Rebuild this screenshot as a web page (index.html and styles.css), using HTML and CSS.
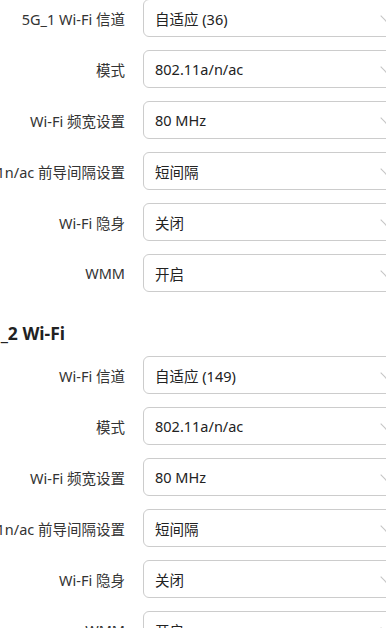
FILE: index.html
```html
<!DOCTYPE html>
<html lang="zh-CN">
<head>
<meta charset="UTF-8">
<meta name="viewport" content="width=device-width, initial-scale=1.0">
<title>Wi-Fi 设置</title>
<link rel="stylesheet" href="styles.css">
</head>
<body>

<div class="page">

    <!-- 5G_1 -->

    <div class="group">

        <div class="row">
            <div class="label"><span>5G_1 Wi-Fi 信道</span></div>
            <div class="select"><span>自适应 (36)</span><i class="arrow"></i></div>
        </div>

        <div class="row">
            <div class="label"><span>模式</span></div>
            <div class="select"><span>802.11a/n/ac</span><i class="arrow"></i></div>
        </div>

        <div class="row">
            <div class="label"><span>Wi-Fi 频宽设置</span></div>
            <div class="select"><span>80 MHz</span><i class="arrow"></i></div>
        </div>

        <div class="row">
            <div class="label"><span>802.11n/ac 前导间隔设置</span></div>
            <div class="select"><span>短间隔</span><i class="arrow"></i></div>
        </div>

        <div class="row">
            <div class="label"><span>Wi-Fi 隐身</span></div>
            <div class="select"><span>关闭</span><i class="arrow"></i></div>
        </div>

        <div class="row">
            <div class="label"><span>WMM</span></div>
            <div class="select"><span>开启</span><i class="arrow"></i></div>
        </div>

    </div>

    <!-- 5G_2 -->

    <h3 class="title">5G_2 Wi-Fi</h3>

    <div class="group">

        <div class="row">
            <div class="label"><span>Wi-Fi 信道</span></div>
            <div class="select"><span>自适应 (149)</span><i class="arrow"></i></div>
        </div>

        <div class="row">
            <div class="label"><span>模式</span></div>
            <div class="select"><span>802.11a/n/ac</span><i class="arrow"></i></div>
        </div>

        <div class="row">
            <div class="label"><span>Wi-Fi 频宽设置</span></div>
            <div class="select"><span>80 MHz</span><i class="arrow"></i></div>
        </div>

        <div class="row">
            <div class="label"><span>802.11n/ac 前导间隔设置</span></div>
            <div class="select"><span>短间隔</span><i class="arrow"></i></div>
        </div>

        <div class="row">
            <div class="label"><span>Wi-Fi 隐身</span></div>
            <div class="select"><span>关闭</span><i class="arrow"></i></div>
        </div>

        <div class="row">
            <div class="label"><span>WMM</span></div>
            <div class="select"><span>开启</span><i class="arrow"></i></div>
        </div>

    </div>

</div>

</body>
</html>
```

FILE: styles.css
```css
*{
    margin:0;
    padding:0;
    box-sizing:border-box;
    font-family:"Noto Sans","Noto Sans CJK SC",sans-serif;
}

body{
    background:#fff;
    overflow:hidden;
    width:386px;
    height:628px;
}

/* PAGE (scrolled view) */

.page{
    margin-top:-1px;
    margin-left:-22px;
}

.group{
    display:flex;
    flex-direction:column;
    gap:13px;
}

.row{
    display:grid;
    grid-template-columns:147px 260px;
    column-gap:18px;
    align-items:center;
}

.label{
    display:flex;
    justify-content:flex-end;
    white-space:nowrap;
    font-size:14.5px;
    color:#333;
}

.select{
    height:38px;
    border:1px solid #ccc;
    border-radius:6px;
    padding:0 12px 0 11px;

    display:flex;
    align-items:center;
    justify-content:space-between;

    font-size:14.5px;
    color:#222;
}

.arrow{
    width:8px;
    height:8px;
    border-right:1px solid #c4c4c4;
    border-bottom:1px solid #c4c4c4;
    transform:rotate(45deg);
    margin-top:-4px;
}

/* TITLE */

.title{
    margin:31px 0 13px;
    line-height:20px;
    font-size:17.5px;
    font-weight:bold;
    color:#222;
}
```
